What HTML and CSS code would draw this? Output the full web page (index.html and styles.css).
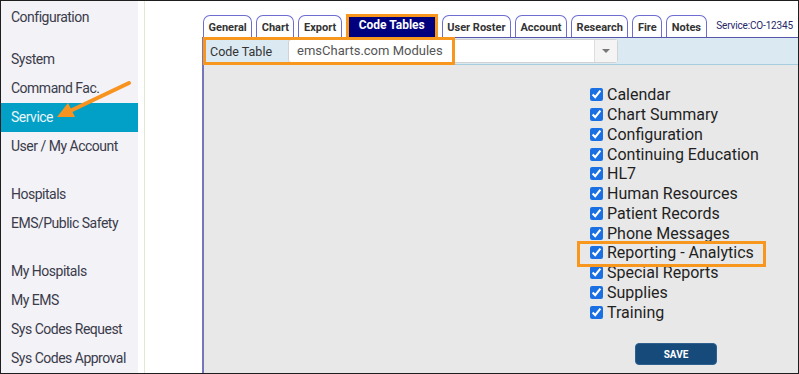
FILE: index.html
```html
<!DOCTYPE html>
<html lang="en">
<head>
<meta charset="UTF-8">
<title>Service | Code Tables</title>
<meta name="viewport" content="width=device-width, initial-scale=1.0">
<link rel="stylesheet" href="styles.css">
</head>
<body>

<div class="frame">
  <nav class="sidebar">
    <div class="group head">
      <a class="nav-item">Configuration</a>
    </div>
    <div class="group">
      <a class="nav-item">System</a>
      <a class="nav-item">Command Fac.</a>
      <a class="nav-item active">Service</a>
      <a class="nav-item">User / My Account</a>
    </div>
    <div class="group">
      <a class="nav-item">Hospitals</a>
      <a class="nav-item">EMS/Public Safety</a>
    </div>
    <div class="group">
      <a class="nav-item">My Hospitals</a>
      <a class="nav-item">My EMS</a>
      <a class="nav-item">Sys Codes Request</a>
      <a class="nav-item">Sys Codes Approval</a>
    </div>
  </nav>

  <div class="spacer"></div>

  <main class="main">
    <div class="tabbar">
      <ul class="tabs">
        <li class="tab">General</li>
        <li class="tab">Chart</li>
        <li class="tab">Export</li>
        <li class="tab current">Code Tables</li>
        <li class="tab">User Roster</li>
        <li class="tab">Account</li>
        <li class="tab">Research</li>
        <li class="tab">Fire</li>
        <li class="tab">Notes</li>
      </ul>
      <span class="service-id">Service:CO-12345</span>
    </div>

    <div class="panel">
      <div class="code-row">
        <label class="code-label" for="codeTable">Code Table</label>
        <div class="select" id="codeTable">
          <span class="select-value">emsCharts.com Modules</span>
          <span class="select-arrow"></span>
        </div>
      </div>

      <div class="panel-body">
        <ul class="modules">
          <li><input type="checkbox" checked> Calendar</li>
          <li><input type="checkbox" checked> Chart Summary</li>
          <li><input type="checkbox" checked> Configuration</li>
          <li><input type="checkbox" checked> Continuing Education</li>
          <li><input type="checkbox" checked> HL7</li>
          <li><input type="checkbox" checked> Human Resources</li>
          <li><input type="checkbox" checked> Patient Records</li>
          <li><input type="checkbox" checked> Phone Messages</li>
          <li><input type="checkbox" checked> Reporting - Analytics</li>
          <li><input type="checkbox" checked> Special Reports</li>
          <li><input type="checkbox" checked> Supplies</li>
          <li><input type="checkbox" checked> Training</li>
        </ul>
        <button class="save">SAVE</button>
      </div>
    </div>
  </main>

  <!-- callouts drawn over the screenshot -->
  <div class="hl hl-code"></div>
  <div class="hl hl-report"></div>
  <svg class="arrow" width="90" height="50" viewBox="50 75 90 50">
    <line x1="129" y1="83" x2="70" y2="111" stroke="#f7931e" stroke-width="4" stroke-linecap="round"/>
    <polygon points="57,117 68,103 75,117" fill="#f7931e"/>
  </svg>
</div>

</body>
</html>
```

FILE: styles.css
```css
body {
  margin: 0;
  font-family: Roboto, "Liberation Sans", sans-serif;
  background: #fff;
}

.frame {
  position: relative;
  display: flex;
  width: 799px;
  height: 374px;
  box-sizing: border-box;
  border: 1px solid #1e1e1e;
  overflow: hidden;
}

/* left navigation */
.sidebar {
  width: 137px;
  flex-shrink: 0;
  background: #f2f2f7;
  padding-top: 1.5px;
  box-sizing: border-box;
}

.group {
  display: flex;
  flex-direction: column;
  margin-bottom: 19px;
}

.group.head {
  margin-bottom: 13px;
}

.nav-item {
  height: 29px;
  line-height: 29px;
  padding-left: 10px;
  font-size: 14px;
  letter-spacing: -0.5px;
  color: #3b3b4a;
}

.nav-item.active {
  background: #02a0c6;
  color: #eaf6fa;
}

.spacer {
  width: 57px;
  margin-left: 6px;
  border-left: 1px solid #e3e8d3;
  flex-shrink: 0;
}

/* main area */
.main {
  flex: 1;
  display: flex;
  flex-direction: column;
}

.tabbar {
  height: 36px;
  display: flex;
  align-items: flex-end;
  padding-left: 1px;
  padding-right: 5px;
}

.tabs {
  display: flex;
  align-items: flex-end;
  gap: 4px;
  list-style: none;
  margin: 0;
  padding: 0;
}

.tab {
  height: 22px;
  box-sizing: border-box;
  padding: 2px 4.5px 0;
  line-height: 19px;
  background: #fff;
  border: 1.5px solid #6d6dd2;
  border-bottom: none;
  border-radius: 7px 7px 0 0;
  font-size: 11px;
  font-weight: bold;
  color: #333;
}

.tab.current {
  height: 23px;
  padding: 0 10px;
  line-height: 17px;
  background: #00007f;
  border: 3px solid #f7971e;
  border-bottom: none;
  border-radius: 0;
  font-size: 12px;
  color: #fff;
}

.service-id {
  margin-left: auto;
  margin-bottom: 6px;
  font-size: 10px;
  letter-spacing: -0.15px;
  color: #262668;
}

.panel {
  flex: 1;
  background: #e8e8e8;
  border-left: 2px solid #7575bd;
  border-top: 1px solid #5656aa;
}

.code-row {
  display: flex;
  align-items: center;
  height: 27px;
  box-sizing: border-box;
  background: #dae9f2;
  border-bottom: 1px solid #a6cde0;
}

.code-label {
  width: 84px;
  padding-left: 6px;
  box-sizing: border-box;
  font-size: 12.5px;
  color: #333;
}

.select {
  display: flex;
  width: 330px;
  height: 24px;
  box-sizing: border-box;
  background: #fff;
  border: 1px solid #d2d2d2;
  border-radius: 3px;
}

.select-value {
  flex: 1;
  padding-left: 8px;
  line-height: 22px;
  font-size: 13px;
  color: #555;
}

.select-arrow {
  position: relative;
  width: 22px;
  background: #f4f4f4;
  border-left: 1px solid #ddd;
}

.select-arrow::after {
  content: "";
  position: absolute;
  left: 7px;
  top: 9px;
  border-left: 4px solid transparent;
  border-right: 4px solid transparent;
  border-top: 4px solid #777;
}

.panel-body {
  padding: 20px 0 0 386px;
}

.modules {
  list-style: none;
  margin: 0;
  padding: 0;
}

.modules li {
  display: flex;
  align-items: center;
  height: 19.75px;
  font-size: 16px;
  color: #1f1f1f;
}

.modules input {
  width: 13px;
  height: 13px;
  margin: 0 4px 0 0;
  accent-color: #1a6fe3;
}

.save {
  display: block;
  margin: 21px 0 0 45px;
  width: 82px;
  height: 22px;
  background: #164a7b;
  border: 1px solid #2d5f8f;
  border-radius: 4px;
  color: #fff;
  font-family: Roboto, "Liberation Sans", sans-serif;
  font-size: 10px;
  font-weight: bold;
  cursor: pointer;
}

/* orange callouts */
.hl {
  position: absolute;
  box-sizing: border-box;
  border: 3px solid #f7971e;
}

.hl-code {
  left: 202px;
  top: 36px;
  width: 252px;
  height: 28px;
}

.hl-report {
  left: 576px;
  top: 240px;
  width: 189px;
  height: 26px;
}

.arrow {
  position: absolute;
  left: 49px;
  top: 74px;
}
```
